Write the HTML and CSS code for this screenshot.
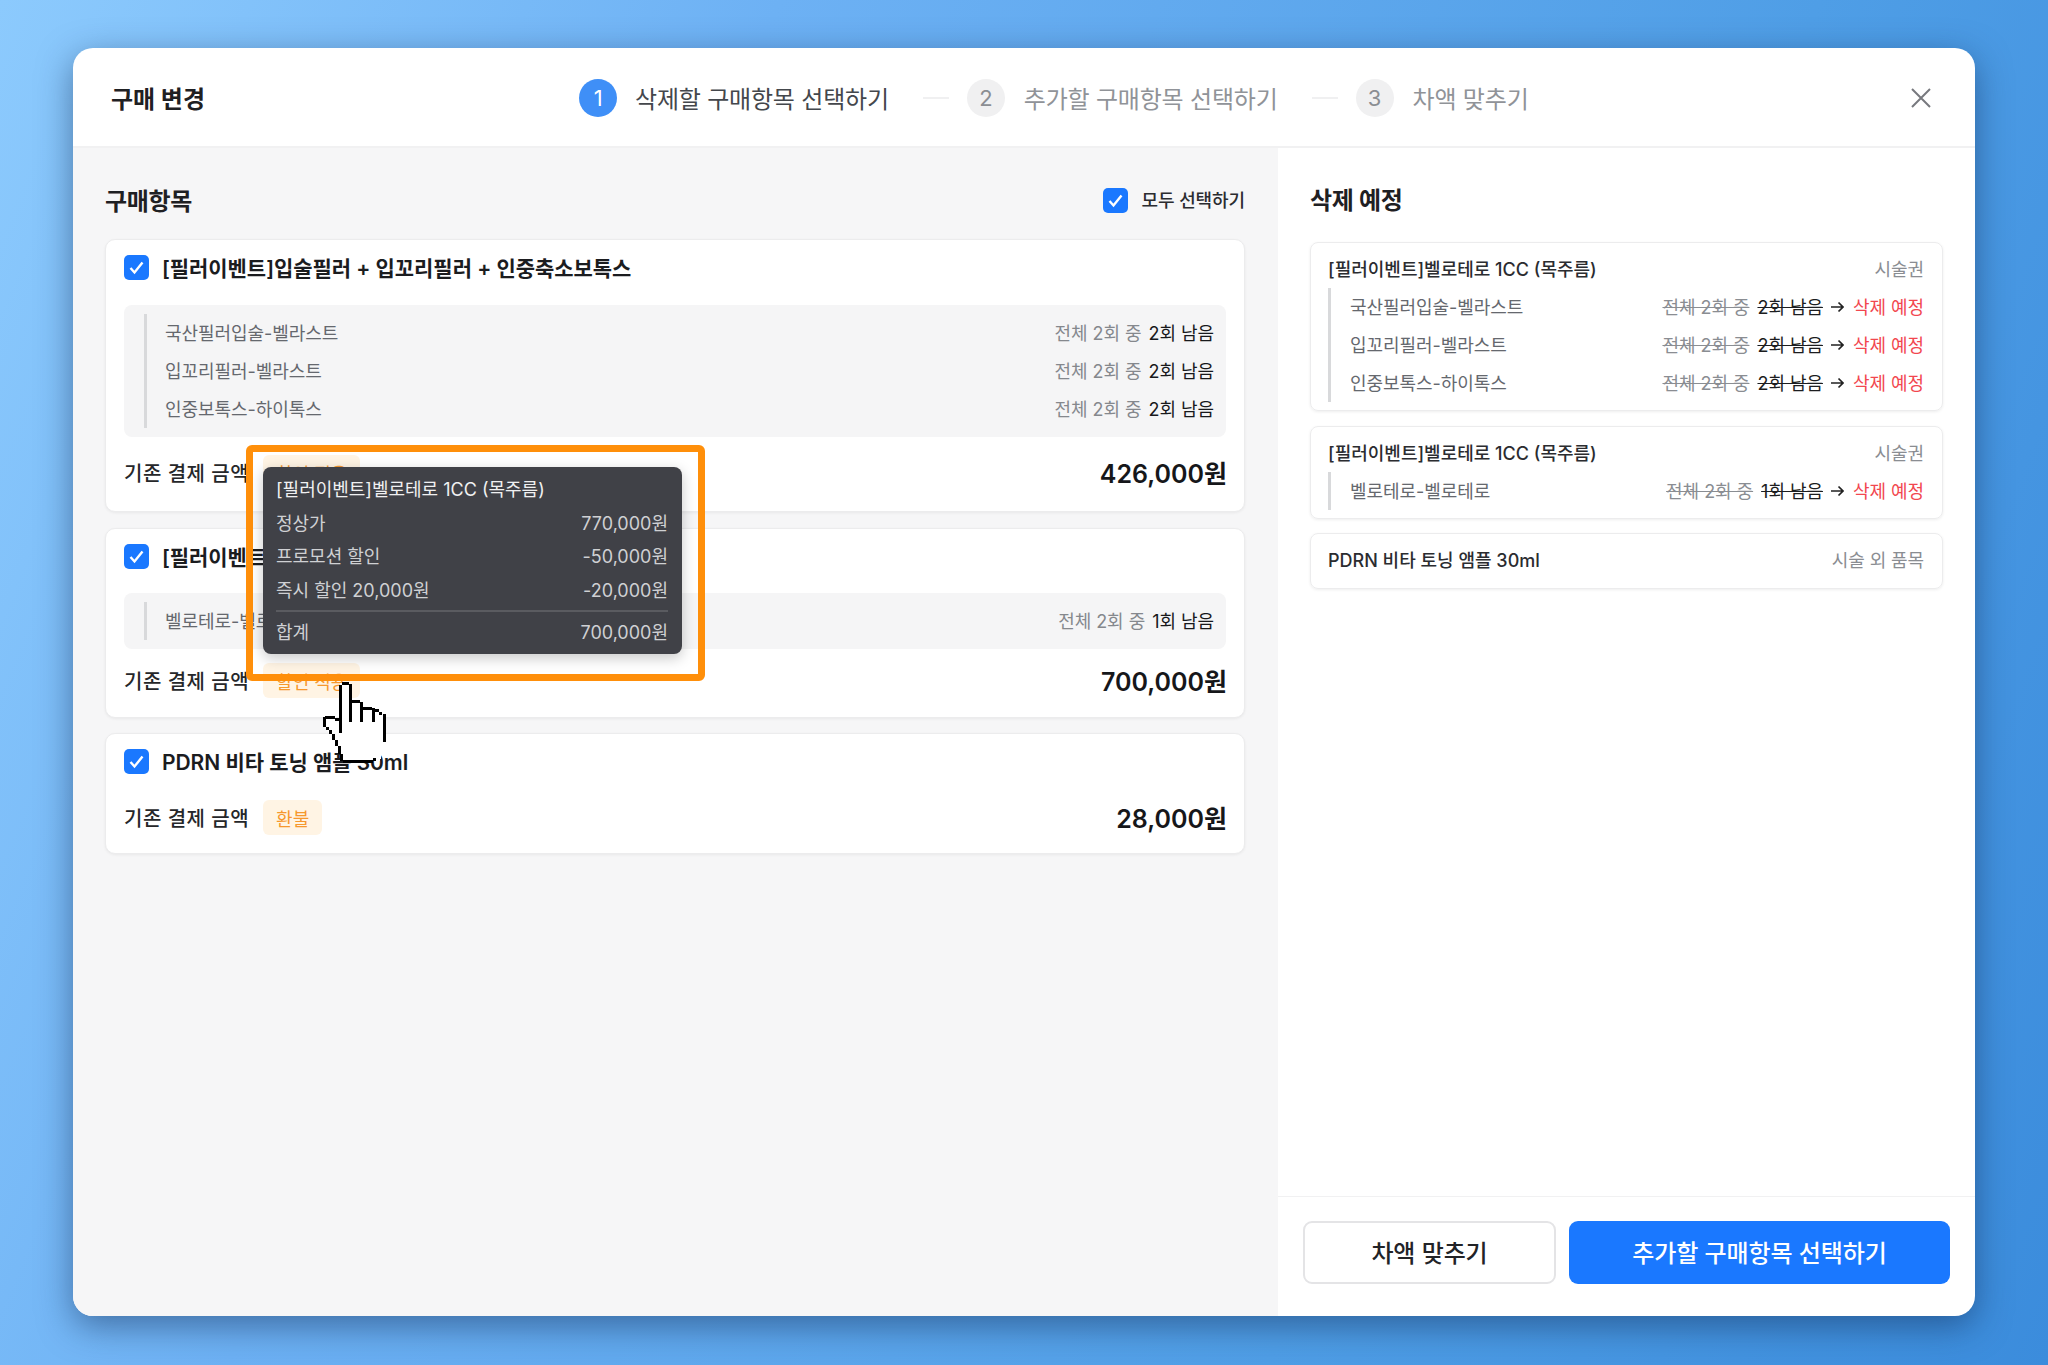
FILE: index.html
```html
<!DOCTYPE html>
<html lang="ko">
<head>
<meta charset="utf-8">
<title>구매 변경</title>
<link rel="stylesheet" href="styles.css">
</head>
<body>
<div class="modal">
  <header class="head">
    <h1 class="head-title">구매 변경</h1>
    <ol class="steps">
      <li class="step step--on"><span class="step-num">1</span><span class="step-text">삭제할 구매항목 선택하기</span></li>
      <li class="step-dash"></li>
      <li class="step"><span class="step-num">2</span><span class="step-text">추가할 구매항목 선택하기</span></li>
      <li class="step-dash"></li>
      <li class="step"><span class="step-num">3</span><span class="step-text">차액 맞추기</span></li>
    </ol>
    <svg class="close" viewBox="0 0 22 22" aria-label="닫기"><path d="M2 2 20 20M20 2 2 20"/></svg>
  </header>
  <div class="main">
    <section class="left">
      <div class="left-top">
        <h2 class="sec-title">구매항목</h2>
        <label class="all"><svg class="check" viewBox="0 0 25 25"><rect width="25" height="25" rx="5"/><path d="M6.5 13 10.5 17.5 18.5 7.5"/></svg><span>모두 선택하기</span></label>
      </div>
      <div class="cards">
        <article class="card card--tall">
          <div class="card-head"><svg class="check" viewBox="0 0 25 25"><rect width="25" height="25" rx="5"/><path d="M6.5 13 10.5 17.5 18.5 7.5"/></svg><span>[필러이벤트]입술필러 + 입꼬리필러 + 인중축소보톡스</span></div>
          <div class="sub">
            <div class="sub-list">
              <div class="row"><span>국산필러입술-벨라스트</span><span class="count">전체 2회 중 <b>2회 남음</b></span></div>
              <div class="row"><span>입꼬리필러-벨라스트</span><span class="count">전체 2회 중 <b>2회 남음</b></span></div>
              <div class="row"><span>인중보톡스-하이톡스</span><span class="count">전체 2회 중 <b>2회 남음</b></span></div>
            </div>
          </div>
          <div class="card-foot"><span class="foot-label">기존 결제 금액</span><span class="badge">할인 적용</span><span class="price">426,000원</span></div>
        </article>
        <article class="card">
          <div class="card-head"><svg class="check" viewBox="0 0 25 25"><rect width="25" height="25" rx="5"/><path d="M6.5 13 10.5 17.5 18.5 7.5"/></svg><span>[필러이벤트]벨로테로 1CC (목주름)</span></div>
          <div class="sub">
            <div class="sub-list">
              <div class="row"><span>벨로테로-벨로테로</span><span class="count">전체 2회 중 <b>1회 남음</b></span></div>
            </div>
          </div>
          <div class="card-foot"><span class="foot-label">기존 결제 금액</span><span class="badge">할인 적용</span><span class="price">700,000원</span></div>
        </article>
        <article class="card card--plain">
          <div class="card-head"><svg class="check" viewBox="0 0 25 25"><rect width="25" height="25" rx="5"/><path d="M6.5 13 10.5 17.5 18.5 7.5"/></svg><span>PDRN 비타 토닝 앰플 30ml</span></div>
          <div class="card-foot"><span class="foot-label">기존 결제 금액</span><span class="badge">환불</span><span class="price">28,000원</span></div>
        </article>
      </div>
    </section>
    <section class="right">
      <div class="right-body">
        <h2 class="sec-title sec-title--right">삭제 예정</h2>
        <div class="rcards">
          <article class="rcard">
            <div class="rcard-head"><span>[필러이벤트]벨로테로 1CC (목주름)</span><span class="kind">시술권</span></div>
            <div class="sub-list sub-list--right">
              <div class="row"><span>국산필러입술-벨라스트</span><span class="del"><s>전체 2회 중</s><s class="dark">2회 남음</s><svg class="arrow" viewBox="0 0 14 12"><path d="M1 6H13M8.5 1.5 13 6 8.5 10.5"/></svg><em>삭제 예정</em></span></div>
              <div class="row"><span>입꼬리필러-벨라스트</span><span class="del"><s>전체 2회 중</s><s class="dark">2회 남음</s><svg class="arrow" viewBox="0 0 14 12"><path d="M1 6H13M8.5 1.5 13 6 8.5 10.5"/></svg><em>삭제 예정</em></span></div>
              <div class="row"><span>인중보톡스-하이톡스</span><span class="del"><s>전체 2회 중</s><s class="dark">2회 남음</s><svg class="arrow" viewBox="0 0 14 12"><path d="M1 6H13M8.5 1.5 13 6 8.5 10.5"/></svg><em>삭제 예정</em></span></div>
            </div>
          </article>
          <article class="rcard">
            <div class="rcard-head"><span>[필러이벤트]벨로테로 1CC (목주름)</span><span class="kind">시술권</span></div>
            <div class="sub-list sub-list--right">
              <div class="row"><span>벨로테로-벨로테로</span><span class="del"><s>전체 2회 중</s><s class="dark">1회 남음</s><svg class="arrow" viewBox="0 0 14 12"><path d="M1 6H13M8.5 1.5 13 6 8.5 10.5"/></svg><em>삭제 예정</em></span></div>
            </div>
          </article>
          <article class="rcard rcard--plain">
            <div class="rcard-head"><span>PDRN 비타 토닝 앰플 30ml</span><span class="kind">시술 외 품목</span></div>
          </article>
        </div>
      </div>
      <footer class="foot">
        <button class="btn btn--ghost"><span>차액 맞추기</span></button>
        <button class="btn btn--primary"><span>추가할 구매항목 선택하기</span></button>
      </footer>
    </section>
  </div>

  <div class="highlight"></div>
  <div class="tip">
    <div class="tip-title">[필러이벤트]벨로테로 1CC (목주름)</div>
    <div class="tip-row"><span>정상가</span><span>770,000원</span></div>
    <div class="tip-row"><span>프로모션 할인</span><span>-50,000원</span></div>
    <div class="tip-row"><span>즉시 할인 20,000원</span><span>-20,000원</span></div>
    <div class="tip-row tip-row--sum"><span>합계</span><span>700,000원</span></div>
  </div>
  <svg class="cursor" viewBox="0 0 90 100" shape-rendering="crispEdges">
    <path class="cursor-fill" d="M30 13H40V31H51V38H63V42H72L75 48V72L70 91H33L27 78 22 68 18 62 14 56V47H25L30 50Z"/>
    <path class="cursor-line" d="M29 15h3v48h-3zM32 12h7v3h-7zM39 14h3v38h-3zM42 30h8v3h-8zM50 32h3v20h-3zM53 37h9v3h-9zM62 38h3v14h-3zM65 39h4v3h-4zM69 42h3v3h-3zM73 44h3v28h-3zM15 46h10v3H15zM13 47h3v10h-3zM25 48h4v3h-4zM16 57h3v3h-3zM19 60h3v4h-3zM22 64h3v6h-3zM25 70h3v6h-3zM28 76h3v8h-3zM30 84h3v7h-3zM33 90h30v3H33zM63 88h3v3h-3z"/>
  </svg>
</div>
</body>
</html>
```
FILE: styles.css
```css
* { box-sizing: border-box; }
html, body { margin: 0; height: 100%; }
body {
  width: 2048px;
  height: 1365px;
  overflow: hidden;
  padding: 48px 73px 49px 73px;
  background: linear-gradient(112deg, #8ccafd 0%, #6db1f4 30%, #4f9ee6 70%, #3b8cdc 100%);
  font-family: "Inter", "Noto Sans CJK KR", "Noto Sans", sans-serif;
  color: #1f2023;
}
h1, h2, ol { margin: 0; padding: 0; }
ol { list-style: none; }
s, em { text-decoration: none; font-style: normal; }

.modal {
  position: relative;
  height: 100%;
  display: flex;
  flex-direction: column;
  background: #fff;
  border-radius: 20px;
  box-shadow: 0 10px 34px rgba(16, 42, 84, .5);
}

/* header */
.head {
  height: 100px;
  flex: none;
  display: flex;
  align-items: center;
  padding: 0 43px 0 38px;
  border-bottom: 2px solid #f1f1f2;
}
.head-title { width: 468px; font-size: 24px; font-weight: 700; }
.steps { display: flex; align-items: center; }
.step { display: flex; align-items: center; gap: 19px; font-size: 24px; color: #909398; letter-spacing: -.2px; }
.step-num {
  width: 38px; height: 38px;
  margin-top: 2px;
  display: flex; align-items: center; justify-content: center;
  border-radius: 50%;
  background: #f0f0f1;
  color: #8b8e93;
  font-size: 22px;
}
.step--on { gap: 18px; color: #44474c; }
.step--on .step-num { background: #3f8ff7; color: #fff; }
.step-dash { width: 26px; height: 2px; margin: 2px 18px 0 34px; background: #f0f0f1; }
.close { width: 22px; height: 22px; margin: 2px 0 0 auto; fill: none; stroke: #77797e; stroke-width: 2; }

/* columns */
.main { flex: 1; min-height: 0; display: flex; }
.left {
  width: 1205px;
  flex: none;
  padding: 34px 33px 0 32px;
  background: #f6f6f7;
  border-bottom-left-radius: 20px;
}
.left-top { height: 36px; display: flex; align-items: center; justify-content: space-between; margin-bottom: 21px; }
.sec-title { padding-bottom: 2px; font-size: 24px; font-weight: 700; letter-spacing: -.3px; }
.all { display: flex; align-items: center; gap: 14px; font-size: 18px; font-weight: 500; letter-spacing: -.1px; color: #2b2c30; }
.all span { padding-bottom: 2px; }
.check { width: 25px; height: 25px; flex: none; }
.check rect { fill: #1a78ff; }
.check path { fill: none; stroke: #fff; stroke-width: 2.4; }

/* purchase cards */
.cards { display: flex; flex-direction: column; gap: 15px; }
.card {
  background: #fff;
  border: 1px solid #ececed;
  border-radius: 10px;
  padding: 15px 18px 19px;
  box-shadow: 0 1px 3px rgba(0, 0, 0, .06);
}
.card-head { display: flex; align-items: center; gap: 13px; height: 25px; margin-bottom: 24px; font-size: 21px; font-weight: 600; color: #1b1c1f; letter-spacing: -.05px; }
.card-head span { padding-bottom: 2px; }
.sub { background: #f5f5f6; border-radius: 8px; padding: 12px 12px 12px 20px; margin-bottom: 14px; }
.sub-list { border-left: 3px solid #d8d9db; padding-left: 18px; }
.row { height: 38px; padding-bottom: 2px; display: flex; align-items: center; justify-content: space-between; font-size: 18px; color: #65686e; letter-spacing: -.05px; }
.row:first-child { margin-top: -3px; }
.row:last-child { margin-bottom: -3px; }
.count { color: #85888d; }
.count b { margin-left: 2px; font-weight: 400; color: #18191c; }
.card-foot { height: 35px; display: flex; align-items: center; font-size: 18px; font-weight: 500; color: #26272a; }
.foot-label { margin-right: 14px; font-size: 20px; letter-spacing: .5px; }
.badge { height: 35px; display: flex; align-items: center; padding: 0 13px; border-radius: 6px; background: #fff4e4; color: #f6982e; font-weight: 400; }
.price { margin: 0 -1px 0 auto; padding-bottom: 2px; font-size: 25px; font-weight: 600; color: #16171a; }
.card--tall { padding-bottom: 21px; margin-bottom: 1px; }
.card--tall .card-head { margin-bottom: 25px; }
.card--tall .sub { margin-bottom: 18px; }
.card--plain { padding-bottom: 18px; }
.card--plain .card-head { margin-bottom: 26px; }

/* right column */
.right { flex: 1; min-width: 0; display: flex; flex-direction: column; }
.right-body { flex: 1; padding: 35px 32px 0; }
.sec-title--right { height: 36px; line-height: 36px; margin-bottom: 23px; padding-bottom: 0; }
.rcards { display: flex; flex-direction: column; gap: 15px; }
.rcard {
  border: 1px solid #ececed;
  border-radius: 8px;
  padding: 7px 18px 11px 17px;
  box-shadow: 0 1px 3px rgba(0, 0, 0, .07);
}
.rcard-head { height: 38px; padding-bottom: 2px; display: flex; align-items: center; justify-content: space-between; margin-bottom: 3px; font-size: 18px; font-weight: 500; color: #2b2c30; }
.kind { font-weight: 400; color: #8a8d92; letter-spacing: -.1px; }
.sub-list--right { padding-left: 19px; }
.del { display: flex; align-items: center; color: #8a8d92; }
.del s { text-decoration: line-through; }
.del .dark { margin-left: 8px; color: #1c1d20; }
.del em { color: #f2474f; }
.arrow { width: 14px; height: 12px; margin: 2px 9px 0 7px; fill: none; stroke: #222; stroke-width: 1.7; }
.rcard--plain { padding: 7px 18px 9px 17px; margin-top: -1px; }
.rcard--plain .rcard-head { margin-bottom: 0; }

.foot { height: 120px; flex: none; display: flex; gap: 13px; padding: 24px 25px 0 25px; border-top: 1px solid #f1f1f2; }
.btn { height: 63px; border-radius: 9px; font: inherit; font-size: 24px; font-weight: 500; letter-spacing: -.1px; }
.btn span { display: block; padding-bottom: 2px; }
.btn--ghost { width: 253px; background: #fff; color: #222327; border: 2px solid #e4e4e6; }
.btn--primary { flex: 1; background: #1a78ff; color: #fff; border: 0; }

/* overlays */
.highlight {
  position: absolute;
  left: 173px; top: 397px;
  width: 459px; height: 236px;
  border: 7px solid #ff8f0a;
  border-radius: 6px;
}
.tip {
  position: absolute;
  left: 190px; top: 419px;
  width: 419px; height: 187px;
  padding: 7px 14px 0 13px;
  border-radius: 8px;
  background: #404147;
  color: #cfd0d3;
  font-size: 18px;
  box-shadow: 0 4px 14px rgba(0, 0, 0, .22);
}
.tip-title { height: 31px; line-height: 31px; color: #f0f0f1; }
.tip-row { height: 33.5px; display: flex; align-items: center; justify-content: space-between; }
.tip-row--sum { height: 40px; margin-top: 4px; border-top: 2px solid #5a5b60; }
.cursor { position: absolute; left: 237px; top: 622px; width: 90px; height: 100px; }
.cursor-fill { fill: #fff; }
.cursor-line { fill: #000; }
```
